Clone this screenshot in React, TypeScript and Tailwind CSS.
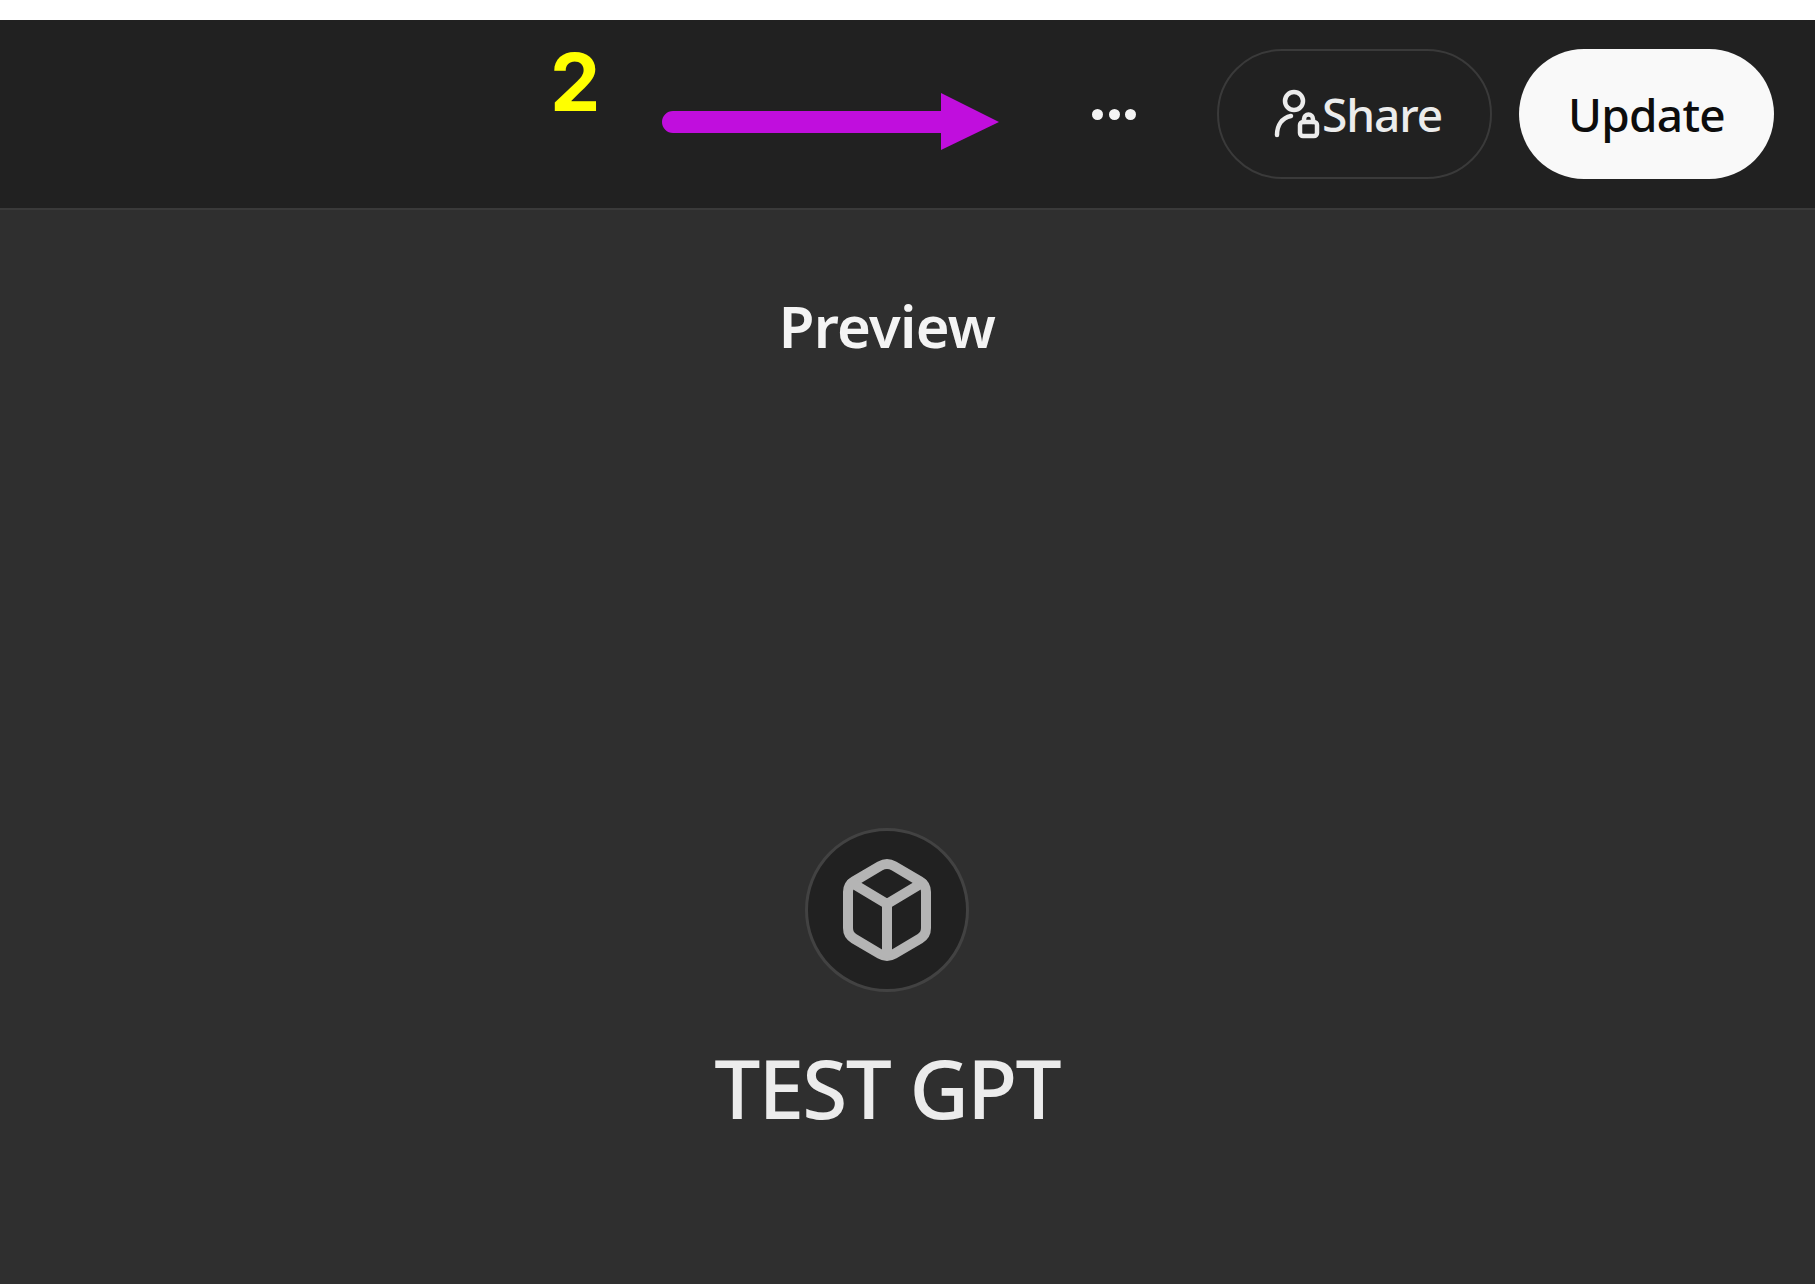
export default function App() {
  return (
    <div className="relative h-screen overflow-hidden bg-white pt-[20px] font-['Noto_Sans',sans-serif]">
      {/* Header */}
      <header className="flex h-[190px] items-start justify-end border-b-2 border-[#3a3a3a] bg-[#212121] pt-[29px] pr-[41px]">
        <button className="mt-[41px] mr-[81px] flex h-[48px] w-[44px] items-center justify-between">
          <span className="h-[11px] w-[11px] rounded-full bg-[#f4f4f4]" />
          <span className="h-[11px] w-[11px] rounded-full bg-[#f4f4f4]" />
          <span className="h-[11px] w-[11px] rounded-full bg-[#f4f4f4]" />
        </button>
        <button className="flex h-[130px] w-[275px] items-center justify-center gap-[2px] rounded-[65px] border-2 border-[#3a3a3a] pl-[7px] text-[46px] font-[550] tracking-[-1.1px] text-[#ececec]">
          <svg width="46" height="50" viewBox="0 0 46 50" fill="none" stroke="#ececec" strokeWidth="4.5" strokeLinecap="round">
            <circle cx="20" cy="12" r="9" />
            <path d="M3 46c0-10 5-17 14-19" />
            <rect x="26" y="33" width="17" height="14" rx="3" />
            <path d="M30 33v-3a4.5 4.5 0 0 1 9 0v3" />
          </svg>
          Share
        </button>
        <button className="ml-[27px] flex h-[130px] w-[255px] items-center justify-center rounded-[65px] bg-[#f9f9f9] text-[46px] font-[550] tracking-[-0.7px] text-[#0d0d0d]">
          Update
        </button>
      </header>

      {/* Preview panel */}
      <main className="flex h-full flex-col items-center bg-[#2f2f2f] pt-[78px] pr-[41px]">
        <h2 className="text-[58px] leading-[76px] font-semibold tracking-[-0.7px] text-[#f4f4f4]">Preview</h2>
        <div className="mt-[464px] flex h-[164px] w-[164px] items-center justify-center rounded-full border-[3px] border-[#424242] bg-[#212121]">
          <svg width="100" height="108" viewBox="0 0 100 108" fill="none" stroke="#b4b4b4" strokeWidth="10" strokeLinejoin="round" strokeLinecap="round">
            <path d="M43 10Q50 6 57 10L83 25.4Q89 29 89 36V72Q89 79 83 82.6L57 98Q50 102 43 98L17 82.6Q11 79 11 72V36Q11 29 17 25.4Z" />
            <path d="M15 27L50 48L85 27M50 48V98" />
          </svg>
        </div>
        <h1 className="mt-[39px] text-[82px] leading-[112px] font-medium tracking-[-1.8px] text-[#ececec]">TEST GPT</h1>
      </main>

      {/* Annotation over the header */}
      <span className="absolute top-[33px] left-[550px] font-['Inter',sans-serif] text-[80px] leading-[98px] font-bold text-[#ffff00]">2</span>
      <svg className="absolute top-[93px] left-[662px]" width="338" height="58" viewBox="0 0 338 58">
        <path d="M11 18H279V0L337 29L279 57V40H11a11 11 0 0 1 0-22z" fill="#c00edd" />
      </svg>
    </div>
  );
}
